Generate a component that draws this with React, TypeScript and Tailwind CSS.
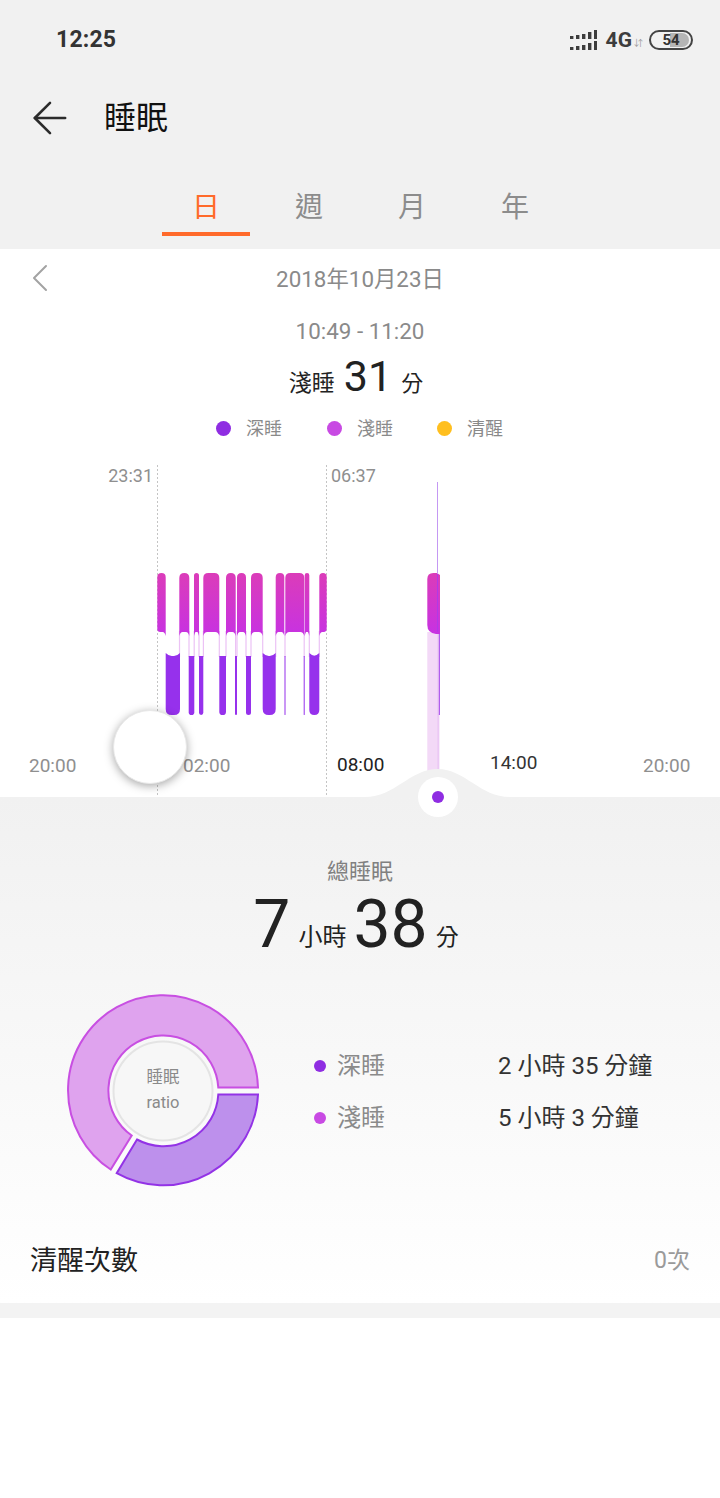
import { ArrowLeft, ChevronLeft } from 'lucide-react'

const lightBars = [
  [157.3, 165.7],
  [179.3, 189.3],
  [194, 199],
  [203.3, 219.3],
  [226, 235.7],
  [237, 246],
  [251, 262.7],
  [275.7, 284.3],
  [285.3, 304.3],
  [304.7, 309.3],
  [319.3, 326.7],
]

const deepBars = [
  [165.7, 180],
  [188.7, 194.3],
  [199, 203.3],
  [219.3, 226],
  [235, 237],
  [246, 251],
  [262.7, 275.7],
  [284.5, 285.5],
  [303.7, 304.7],
  [309.3, 319.3],
]

// pale lines where a light bar hands over to a deep one
const connectors = [179.5, 189, 194.2, 199, 203.4, 219.3, 226, 235.6, 237, 246, 251, 262.7, 275.7, 285, 304.2, 309.3, 319.3]

// chart svg starts at y=465 of the page
const CHART_TOP = 465

function lightPath(a: number, b: number, i: number) {
  const top = 573 - CHART_TOP
  const inner = 632 - CHART_TOP
  const edge = 636 - CHART_TOP
  const r = Math.min(5, (b - a) / 2)
  const c = Math.min(4, (b - a) / 3)
  const head = `M${a} ${top + r}Q${a} ${top} ${a + r} ${top}L${b - r} ${top}Q${b} ${top} ${b} ${top + r}`
  if (i === 0) {
    return `${head}L${b} ${edge}Q${b - 1} ${inner} ${b - 3} ${inner}L${a + 3} ${inner}Q${a} ${inner} ${a} ${inner - 3}Z`
  }
  if (i === lightBars.length - 1) {
    return `${head}L${b} ${inner - 4}Q${b} ${inner} ${b - 3} ${inner}L${a + 3} ${inner}Q${a + 1} ${inner} ${a} ${edge}Z`
  }
  return `${head}L${b} ${edge}Q${b - 1} ${inner} ${b - c} ${inner}L${a + c} ${inner}Q${a + 1} ${inner} ${a} ${edge}Z`
}

function deepPath(a: number, b: number) {
  const top = 653 - CHART_TOP
  const bottom = 715 - CHART_TOP
  const w = b - a
  const r = Math.min(6, w / 2)
  if (w < 8) {
    return `M${a} ${top + 3}L${b} ${top + 3}L${b} ${bottom - r}Q${b} ${bottom} ${b - r} ${bottom}L${a + r} ${bottom}Q${a} ${bottom} ${a} ${bottom - r}Z`
  }
  return `M${a} ${top}Q${a + 3} ${top + 3} ${a + 6} ${top + 3}L${b - 6} ${top + 3}Q${b - 3} ${top + 3} ${b} ${top}L${b} ${bottom - r}Q${b} ${bottom} ${b - r} ${bottom}L${a + r} ${bottom}Q${a} ${bottom} ${a} ${bottom - r}Z`
}

function SleepChart() {
  return (
    <svg width="720" height="332" viewBox="0 0 720 332" className="block">
      <defs>
        <linearGradient id="lightFill" x1="0" y1="0" x2="0" y2="1">
          <stop offset="0" stopColor="#db3cb9" />
          <stop offset="1" stopColor="#c732e2" />
        </linearGradient>
      </defs>
      <line x1="157.5" y1="0" x2="157.5" y2="332" stroke="#c4c4c4" strokeDasharray="2 2" />
      <line x1="326.5" y1="0" x2="326.5" y2="332" stroke="#c4c4c4" strokeDasharray="2 2" />
      <rect x="427.3" y="167" width="12.2" height="140" fill="#f3d9f7" />
      {connectors.map((x) => (
        <rect key={x} x={x - 0.6} y="166" width="1.2" height="26" fill="#ecc2f5" />
      ))}
      {lightBars.map(([a, b], i) => (
        <path key={a} d={lightPath(a, b, i)} fill="url(#lightFill)" />
      ))}
      <path d="M427.3 114Q427.3 108 433.3 108L437 108L440 110L440 169L436 169Q427.3 168 427.3 160Z" fill="url(#lightFill)" />
      <rect x="438.6" y="169" width="1.3" height="81" fill="#a84fec" />
      <rect x="437" y="17" width="1" height="92" fill="#c498f3" />
      <rect x="437" y="109" width="1" height="58" fill="#b03ae6" />
      <rect x="437.6" y="169" width="1" height="138" fill="#e6bdf3" />
      {deepBars.map(([a, b]) => (
        <path key={a} d={deepPath(a, b)} fill="#9631ec" />
      ))}
      <path d="M365 332C395 332 410 304 437.5 304C465 304 480 332 510 332Z" fill="#f1f1f1" />
    </svg>
  )
}

function SignalIcon() {
  const xs = [0, 6, 12, 18, 24]
  const heights = [3, 4, 5, 7, 9]
  return (
    <svg width="27" height="21" viewBox="0 0 27 21">
      {[9, 20].map((base) =>
        xs.map((x, i) => (
          <rect key={`${base}-${x}`} x={x} y={base - heights[i]} width="3.4" height={heights[i]} fill="#3d3d3d" />
        )),
      )}
    </svg>
  )
}

function Donut() {
  return (
    <svg width="200" height="200" viewBox="63 990.5 200 200" className="block">
      <path
        d="M258 1087A95 95 0 1 0 110.7 1169L131.7 1135A55 55 0 1 1 218.3 1087Z"
        fill="#dfa3ee"
        stroke="#c84fe2"
        strokeWidth="2"
      />
      <path
        d="M218.3 1094L258 1094A95 95 0 0 1 116.7 1172.7L137 1139A55 55 0 0 0 218.3 1094Z"
        fill="#bd90ec"
        stroke="#9333e6"
        strokeWidth="2"
      />
      <circle cx="163" cy="1090.5" r="49.5" fill="#f7f7f7" stroke="#e4e4e4" strokeWidth="2" />
    </svg>
  )
}

export default function App() {
  return (
    <div className="w-[720px] h-[1498px] bg-white font-[Roboto,'Noto_Sans_CJK_TC',sans-serif] overflow-hidden">
      <div className="h-[249px] bg-[#f1f1f1] flex flex-col">
        <div className="h-[78px] pl-[56px] pr-[27px] pt-[2px] flex items-center justify-between">
          <span className="text-[23px] font-bold text-[#333333] tracking-[0.2px]">12:25</span>
          <div className="flex items-center">
            <SignalIcon />
            <span className="ml-[9px] text-[21px] font-bold text-[#3d3d3d] leading-none">4G</span>
            <span className="ml-[2px] mt-[6px] text-[9px] text-[#9a9a9a] leading-none">⇵</span>
            <div className="ml-[6px] relative w-[44px] h-[20px] rounded-full border-2 border-[#444444] overflow-hidden flex items-center justify-center">
              <div className="absolute left-[19px] top-[1px] bottom-[1px] right-[2px] rounded-r-full bg-[#b5b5b5]" />
              <span className="relative text-[15px] font-bold text-[#333333] leading-none">54</span>
            </div>
          </div>
        </div>
        <div className="h-[80px] pl-[24px] flex items-center">
          <ArrowLeft size={52} strokeWidth={2.6} absoluteStrokeWidth className="text-[#2b2b2b]" />
          <span className="ml-[28px] text-[32px] text-[#111111] leading-none">睡眠</span>
        </div>
        <div className="mt-[7px] pl-[162px] flex">
          {['日', '週', '月', '年'].map((tab, i) => (
            <div
              key={tab}
              className={
                i === 0
                  ? 'w-[88px] mr-[15px] h-[71px] pt-[18px] flex items-center justify-center text-[28px] text-[#ff6a2b] border-b-[4px] border-[#ff6a2b]'
                  : 'w-[88px] mr-[15px] h-[71px] pt-[18px] flex items-center justify-center text-[28px] text-[#8c8c8c] border-b-[4px] border-transparent'
              }
            >
              {tab}
            </div>
          ))}
        </div>
      </div>

      <div className="h-[548px] relative bg-white flex flex-col">
        <ChevronLeft size={48} strokeWidth={2} absoluteStrokeWidth className="absolute left-[16px] top-[5px] text-[#a3a3a3]" />
        <div className="pt-[16px] h-[60px] text-center text-[22.4px] leading-[28px] text-[#8a8a8a]">2018年10月23日</div>
        <div className="mt-[8px] text-center text-[22.4px] leading-[28px] text-[#8a8a8a]">10:49 - 11:20</div>
        <div className="mt-[3px] h-[58px] flex items-baseline justify-center text-[#222222] pr-[8px]">
          <span className="text-[23px]">淺睡</span>
          <span className="mx-[9px] text-[43px] leading-[56px]">31</span>
          <span className="text-[22px]">分</span>
        </div>
        <div className="mt-[4px] h-[36px] flex items-center justify-center text-[18px] text-[#8a8a8a] pr-[1px]">
          <span className="w-[15px] h-[15px] rounded-full bg-[#8f2de2]" />
          <span className="ml-[15px] mr-[45px]">深睡</span>
          <span className="w-[15px] h-[15px] rounded-full bg-[#c84ae3]" />
          <span className="ml-[15px] mr-[44px]">淺睡</span>
          <span className="w-[15px] h-[15px] rounded-full bg-[#ffbf1f]" />
          <span className="ml-[15px]">清醒</span>
        </div>
        <div className="absolute left-0 top-[216px] w-[720px] h-[332px]">
          <SleepChart />
          <span className="absolute right-[567px] top-[0px] text-[18px] leading-[22px] text-[#8f8f8f]">23:31</span>
          <span className="absolute left-[331px] top-[0px] text-[18px] leading-[22px] text-[#8f8f8f]">06:37</span>
          <span className="absolute left-[29px] top-[290px] text-[19px] leading-[22px] text-[#8f8f8f]">20:00</span>
          <span className="absolute left-[183px] top-[290px] text-[19px] leading-[22px] text-[#8f8f8f]">02:00</span>
          <span className="absolute left-[337px] top-[289px] text-[19px] leading-[22px] text-[#222222]">08:00</span>
          <span className="absolute left-[490px] top-[287px] text-[19px] leading-[22px] text-[#333333]">14:00</span>
          <span className="absolute left-[643px] top-[290px] text-[19px] leading-[22px] text-[#8f8f8f]">20:00</span>
          <div className="absolute left-[113px] top-[245px] w-[74px] h-[74px] rounded-full bg-white border border-[#e8e8e8] shadow-[0_2px_10px_rgba(0,0,0,0.35)]" />
        </div>
      </div>

      <div className="h-[506px] relative flex flex-col bg-gradient-to-b from-[#f1f1f1] to-white">
        <div className="absolute left-[417.5px] top-[-20px] w-[40px] h-[40px] rounded-full bg-white flex items-center justify-center">
          <span className="w-[12px] h-[12px] rounded-full bg-[#8f2de2]" />
        </div>
        <div className="mt-[61px] text-center text-[22px] leading-[28px] text-[#808080]">總睡眠</div>
        <div className="mt-[3px] h-[72px] flex items-baseline justify-center text-[#222222] pr-[8px]">
          <span className="text-[66px] leading-[72px]">7</span>
          <span className="ml-[8px] text-[24px] -translate-y-[2px]">小時</span>
          <span className="ml-[7px] mr-[8px] text-[66px] leading-[72px]">38</span>
          <span className="text-[23px] -translate-y-[2px]">分</span>
        </div>
        <div className="mt-[30px] pl-[63px] flex items-center">
          <div className="relative w-[200px] h-[200px]">
            <Donut />
            <div className="absolute inset-0 flex flex-col items-center justify-center text-[16.5px] leading-[25px] text-[#8a8a8a] pb-[2px]">
              <span>睡眠</span>
              <span>ratio</span>
            </div>
          </div>
          <div className="ml-[51px] mt-[2px] flex flex-col gap-[16px] w-[340px]">
            <div className="h-[36px] flex items-center">
              <span className="w-[12px] h-[12px] rounded-full bg-[#8f2de2]" />
              <span className="ml-[11px] w-[161px] text-[24px] text-[#8a8a8a]">深睡</span>
              <span className="text-[24px] text-[#333333]">2 小時 35 分鐘</span>
            </div>
            <div className="h-[36px] flex items-center">
              <span className="w-[12px] h-[12px] rounded-full bg-[#c84ae3]" />
              <span className="ml-[11px] w-[161px] text-[24px] text-[#8a8a8a]">淺睡</span>
              <span className="text-[24px] text-[#333333]">5 小時 3 分鐘</span>
            </div>
          </div>
        </div>
        <div className="mt-[50px] px-[30px] flex items-center justify-between">
          <span className="text-[27px] text-[#222222]">清醒次數</span>
          <span className="text-[23px] text-[#9a9a9a]">0次</span>
        </div>
      </div>
      <div className="h-[15px] bg-[#f3f3f3]" />
    </div>
  )
}
